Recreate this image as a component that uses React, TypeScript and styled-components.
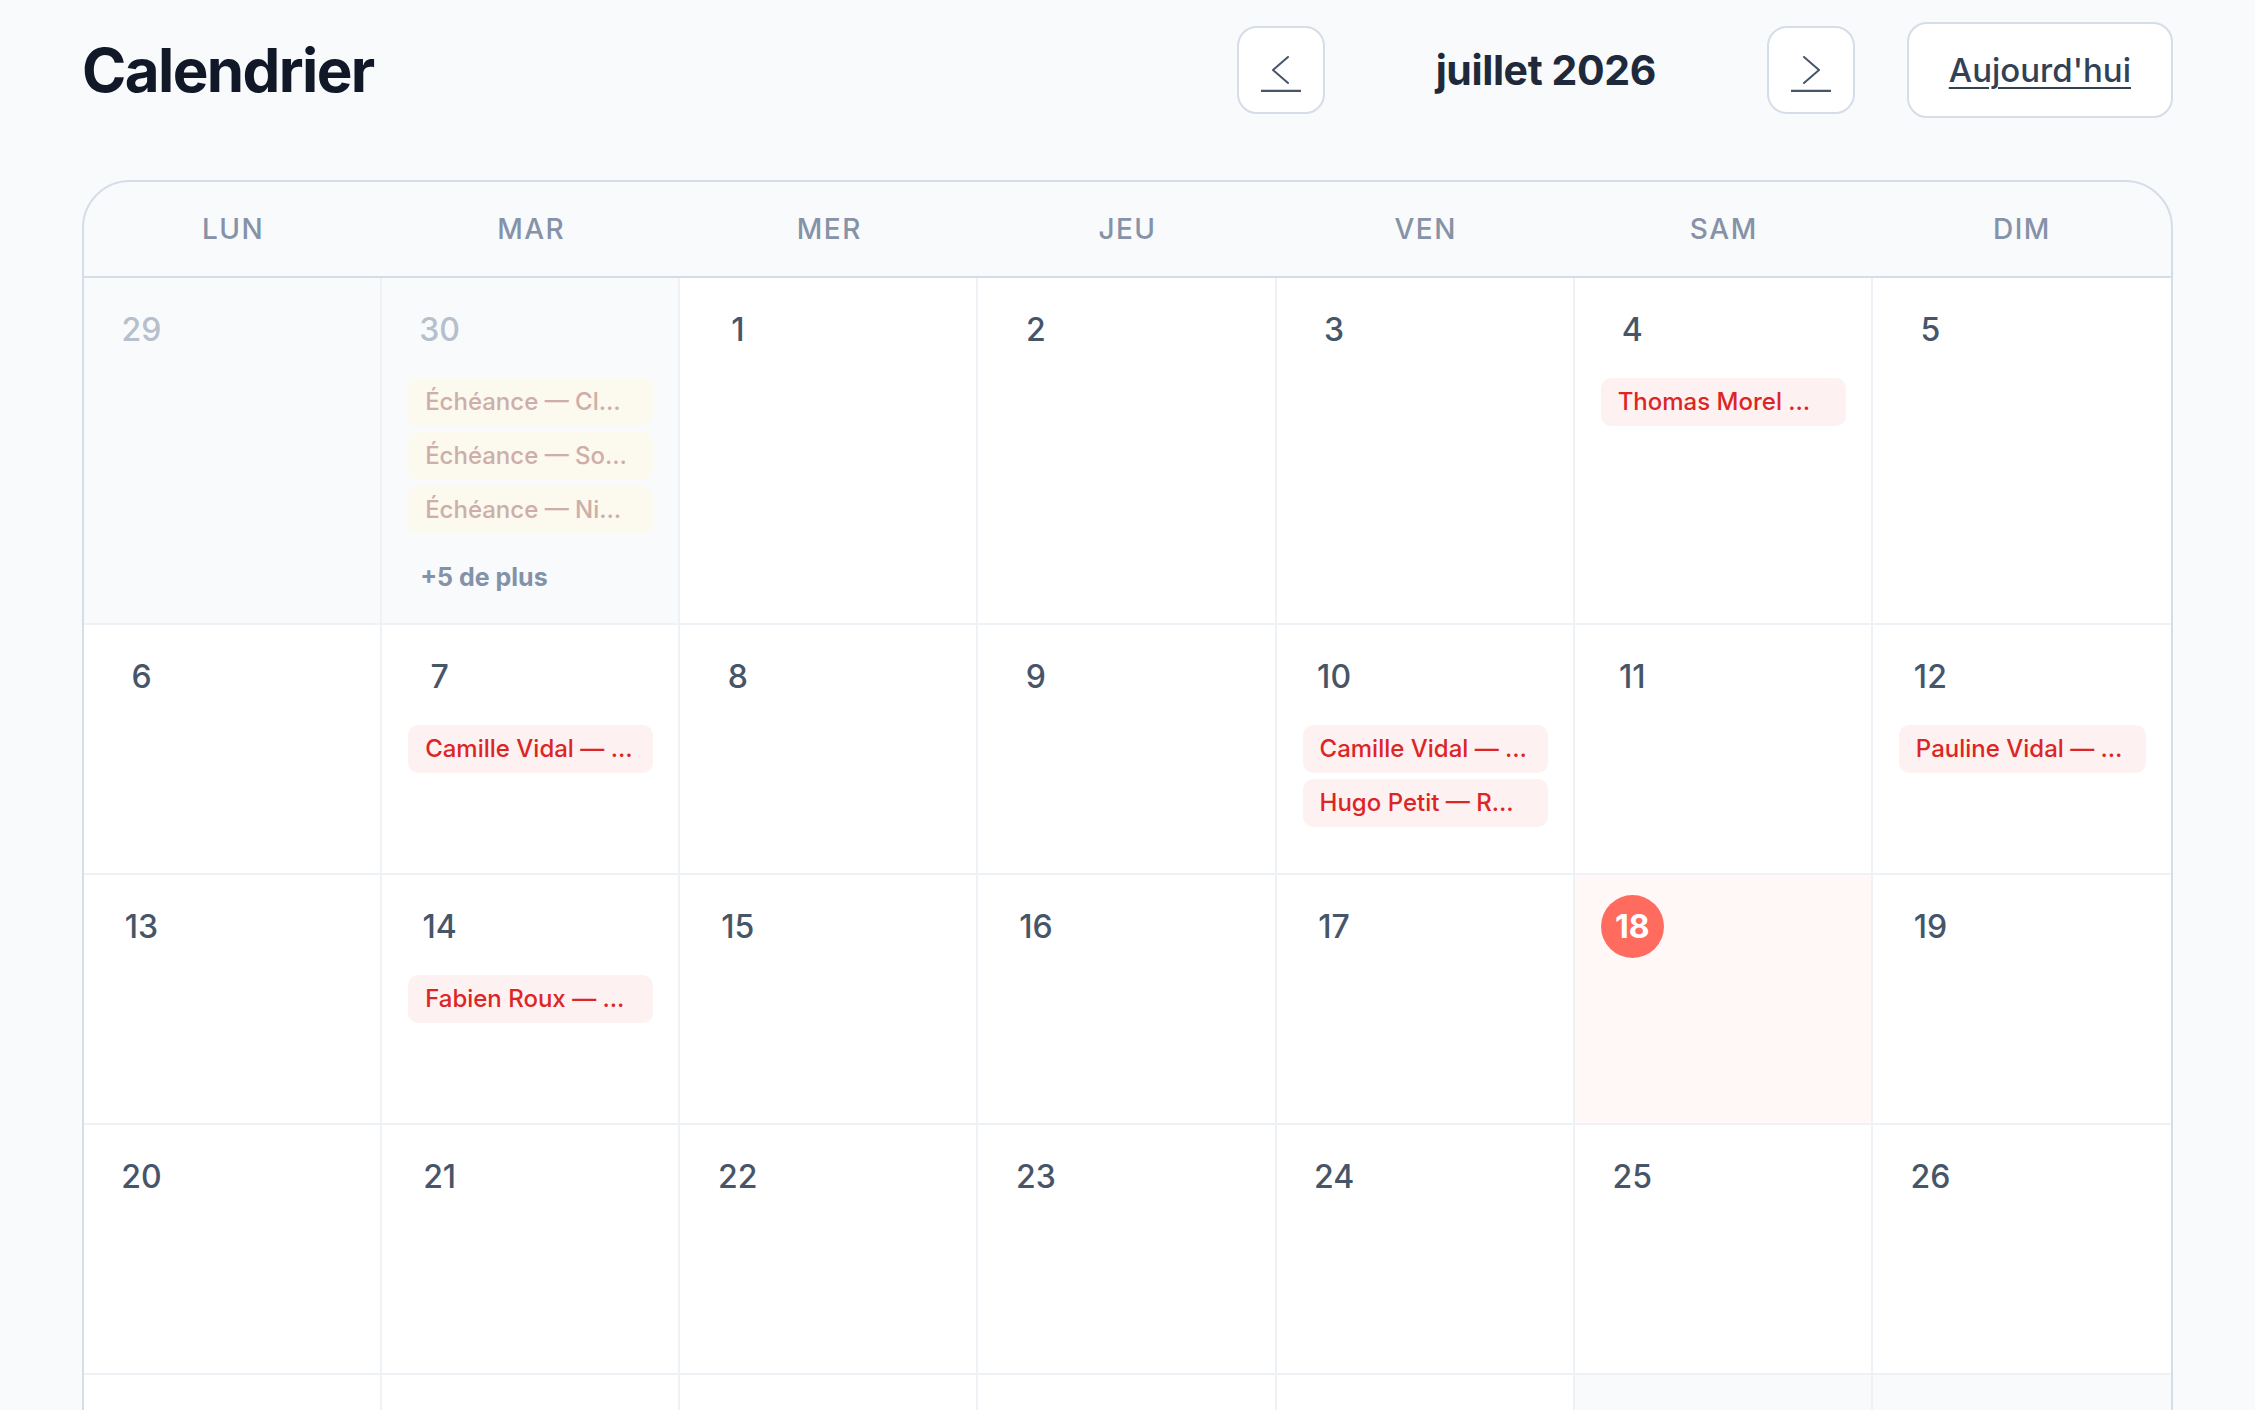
import React from "react";
import styled, { createGlobalStyle } from "styled-components";

type CalEvent = { label: string };
type Day = {
  key: string;
  day: number;
  outside: boolean;
  today: boolean;
  events: CalEvent[];
  more: number;
};

const WEEKDAYS = ["LUN", "MAR", "MER", "JEU", "VEN", "SAM", "DIM"];

const EVENTS: Record<string, { items: string[]; more?: number }> = {
  "6-30": {
    items: ["Échéance — Cl…", "Échéance — So…", "Échéance — Ni…"],
    more: 5,
  },
  "7-4": { items: ["Thomas Morel …"] },
  "7-7": { items: ["Camille Vidal — …"] },
  "7-10": { items: ["Camille Vidal — …", "Hugo Petit — R…"] },
  "7-12": { items: ["Pauline Vidal — …"] },
  "7-14": { items: ["Fabien Roux — …"] },
};

const buildDays = (): Day[] => {
  const days: Day[] = [];
  const start = new Date(2026, 5, 29);
  for (let i = 0; i < 35; i++) {
    const d = new Date(start);
    d.setDate(start.getDate() + i);
    const month = d.getMonth() + 1;
    const key = `${month}-${d.getDate()}`;
    const ev = EVENTS[key];
    days.push({
      key,
      day: d.getDate(),
      outside: month !== 7,
      today: key === "7-18",
      events: ev ? ev.items.map((label) => ({ label })) : [],
      more: ev?.more ?? 0,
    });
  }
  return days;
};

const Chevron = ({ dir }: { dir: "left" | "right" }) => (
  <ArrowIcon viewBox="24 30 40 36" width="40" height="36">
    <polyline
      points={dir === "left" ? "51,31 36,44 51,57" : "37,31 52,44 37,57"}
      fill="none"
      stroke="#475569"
      strokeWidth="2"
      strokeLinecap="round"
      strokeLinejoin="round"
    />
    <line x1="24" y1="65" x2="64" y2="65" stroke="#475569" strokeWidth="2.5" />
  </ArrowIcon>
);

const App = () => {
  const days = buildDays();
  return (
    <>
      <GlobalStyle />
      <Page>
        <Header>
          <Title>Calendrier</Title>
          <Controls>
            <NavButton aria-label="Mois précédent">
              <Chevron dir="left" />
            </NavButton>
            <MonthLabel>juillet 2026</MonthLabel>
            <NavButton aria-label="Mois suivant">
              <Chevron dir="right" />
            </NavButton>
            <TodayButton>Aujourd'hui</TodayButton>
          </Controls>
        </Header>
        <Calendar>
          <WeekHeader>
            {WEEKDAYS.map((w) => (
              <WeekDay key={w}>{w}</WeekDay>
            ))}
          </WeekHeader>
          <Grid>
            {days.map((day) => (
              <Cell key={day.key} $outside={day.outside} $today={day.today}>
                <DateNum $outside={day.outside} $today={day.today}>
                  {day.day}
                </DateNum>
                {day.events.length > 0 && (
                  <EventList>
                    {day.events.map((ev, i) => (
                      <EventPill key={i} $faded={day.outside}>
                        {ev.label}
                      </EventPill>
                    ))}
                  </EventList>
                )}
                {day.more > 0 && <MoreLink>+{day.more} de plus</MoreLink>}
              </Cell>
            ))}
          </Grid>
        </Calendar>
      </Page>
    </>
  );
};

export default App;

const GlobalStyle = createGlobalStyle`
  * {
    box-sizing: border-box;
  }
  body {
    margin: 0;
    background: #f8fafc;
    font-family: Inter, "Noto Sans", sans-serif;
  }
`;

const Page = styled.div`
  padding: 22px 82px 40px;
`;

const Header = styled.header`
  display: flex;
  align-items: center;
  justify-content: space-between;
  height: 96px;
`;

const Title = styled.h1`
  margin: 0;
  font-size: 60px;
  font-weight: 700;
  letter-spacing: -1.6px;
  color: #111827;
`;

const Controls = styled.div`
  display: flex;
  align-items: center;
`;

const NavButton = styled.button`
  width: 88px;
  height: 88px;
  display: flex;
  align-items: center;
  justify-content: center;
  padding: 0;
  background: #ffffff;
  border: 2px solid #d5dde8;
  border-radius: 20px;
  cursor: pointer;
`;

const ArrowIcon = styled.svg`
  margin-top: 8px;
`;

const MonthLabel = styled.div`
  width: 442px;
  text-align: center;
  font-size: 41px;
  font-weight: 700;
  letter-spacing: -0.4px;
  color: #1e293b;
`;

const TodayButton = styled.button`
  margin-left: 52px;
  height: 96px;
  padding: 0 40px;
  background: #ffffff;
  border: 2px solid #d5dde8;
  border-radius: 20px;
  font-family: Inter, "Noto Sans", sans-serif;
  font-size: 33px;
  font-weight: 500;
  color: #334155;
  text-decoration: underline;
  text-underline-offset: 5px;
  text-decoration-thickness: 2px;
  cursor: pointer;
`;

const Calendar = styled.div`
  margin-top: 62px;
  border: 2px solid #d5dde8;
  border-radius: 48px 48px 0 0;
  overflow: hidden;
  background: #f8fafc;
`;

const WeekHeader = styled.div`
  display: grid;
  grid-template-columns: repeat(7, 1fr);
  height: 96px;
  border-bottom: 2px solid #d5dde8;
`;

const WeekDay = styled.div`
  display: flex;
  align-items: center;
  justify-content: center;
  font-size: 28px;
  font-weight: 500;
  letter-spacing: 1.5px;
  color: #8592a7;
`;

const Grid = styled.div`
  display: grid;
  grid-template-columns: repeat(7, 1fr);
  grid-auto-rows: minmax(250px, auto);
`;

const Cell = styled.div<{ $outside: boolean; $today: boolean }>`
  display: flex;
  flex-direction: column;
  align-items: stretch;
  padding: 20px 25px 28px 26px;
  background: ${({ $outside, $today }) =>
    $today ? "#fff8f7" : $outside ? "#f8fafc" : "#ffffff"};
  border-right: 2px solid #eef1f5;
  border-bottom: 2px solid #eef1f5;
  &:nth-child(7n) {
    border-right: none;
  }
`;

const DateNum = styled.div<{ $outside: boolean; $today: boolean }>`
  width: 63px;
  height: 63px;
  display: flex;
  align-items: center;
  justify-content: center;
  border-radius: 50%;
  font-size: 32px;
  font-weight: ${({ $today }) => ($today ? 700 : 500)};
  background: ${({ $today }) => ($today ? "#ff6b5e" : "transparent")};
  color: ${({ $outside, $today }) =>
    $today ? "#ffffff" : $outside ? "#b6bfcc" : "#475569"};
`;

const EventList = styled.div`
  margin-top: 17px;
  display: flex;
  flex-direction: column;
  gap: 6px;
`;

const EventPill = styled.div<{ $faded: boolean }>`
  padding: 10px 17px;
  border-radius: 10px;
  font-size: 24px;
  line-height: 28px;
  font-weight: 500;
  white-space: nowrap;
  overflow: hidden;
  background: ${({ $faded }) => ($faded ? "#fcf9ee" : "#fef1f1")};
  color: ${({ $faded }) => ($faded ? "#cdaea9" : "#dc2626")};
`;

const MoreLink = styled.div`
  margin-top: 25px;
  padding-left: 12px;
  font-size: 25px;
  line-height: 36px;
  font-weight: 700;
  color: #8492a9;
`;
